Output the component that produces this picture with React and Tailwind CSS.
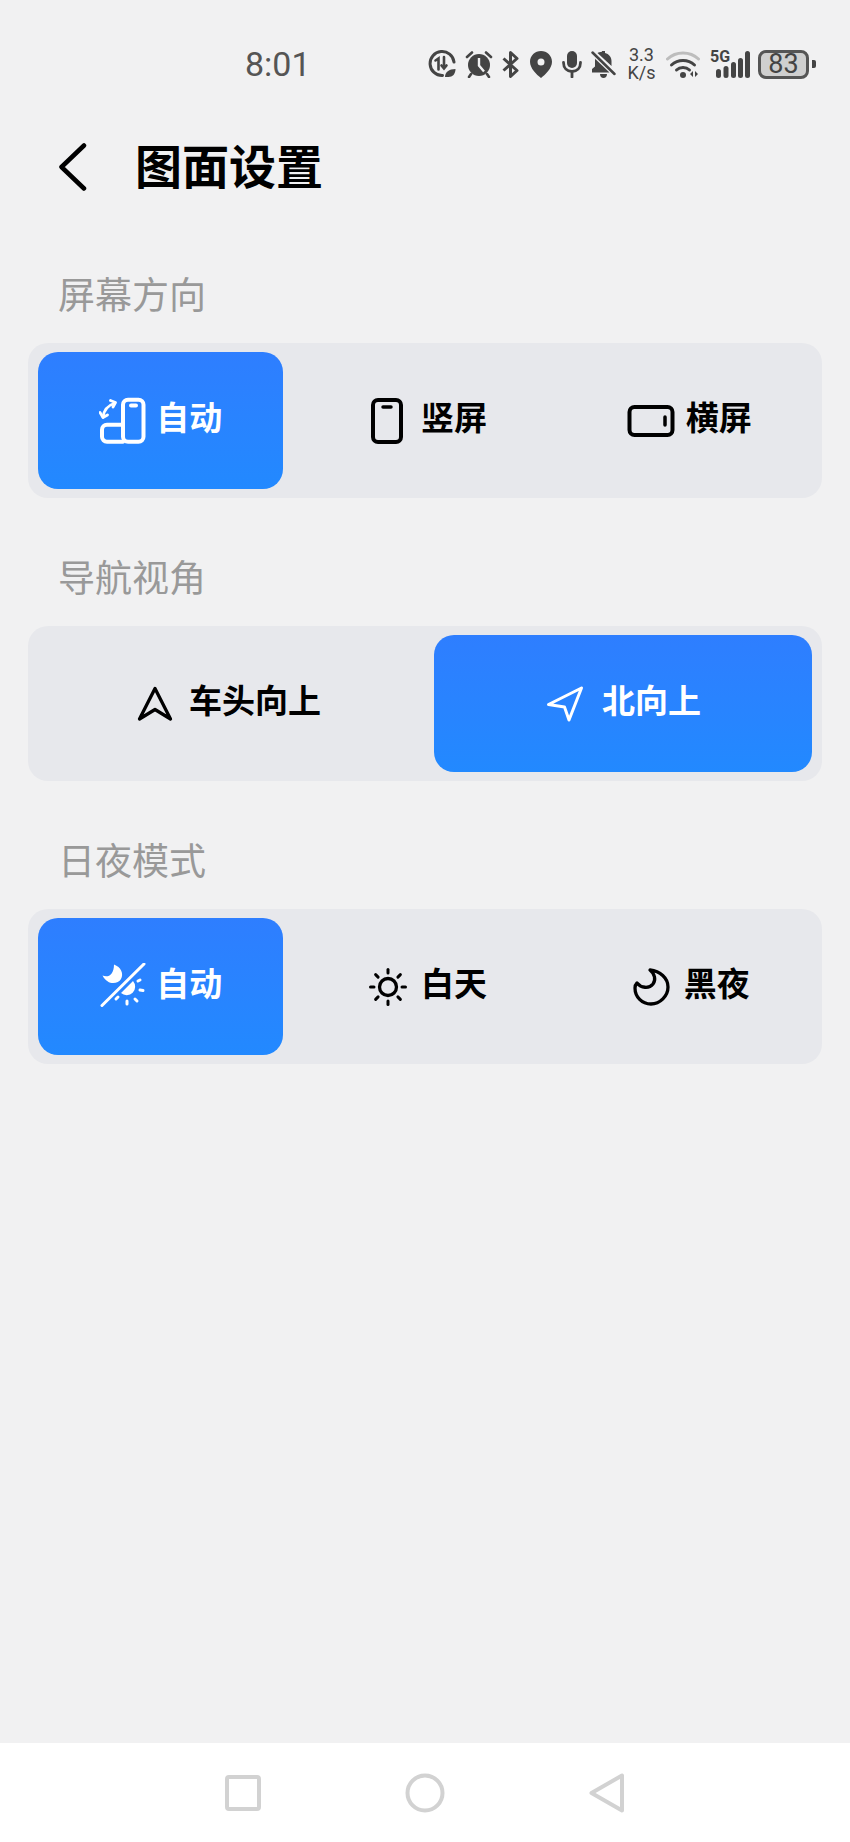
import React from "react";

const FONT = '"Noto Sans CJK SC", "Noto Sans", sans-serif';

function Saver() {
  return (
    <svg width="28" height="28" viewBox="0 0 28 28" fill="none" stroke="#444" strokeWidth="3" strokeLinecap="round">
      <path d="M14.5 25.5A12 12 0 1 1 26 12" />
      <path d="M10.5 19.5V8.5L7.5 10.5" strokeWidth="2.6" />
      <path d="M16 7v11M13.5 15.5L16 18.5L18.5 15.5" strokeWidth="2.6" />
      <path d="M17 27c0-5 4-8 10.5-8c0 5-3 8-7 8z" fill="#444" stroke="none" />
    </svg>
  );
}
function Alarm() {
  return (
    <svg width="28" height="28" viewBox="0 0 28 28" fill="none">
      <circle cx="14" cy="15" r="11" fill="#444" />
      <path d="M14 8v7.5l5 6" stroke="#f1f1f2" strokeWidth="2.4" />
      <path d="M2 7L7 2.500M26 7L21 2.500M6 24L4 27M22 24L24 27" stroke="#444" strokeWidth="2.6" strokeLinecap="round" />
    </svg>
  );
}
function Bluetooth() {
  return (
    <svg width="17" height="27" viewBox="0 0 17 27" fill="none" stroke="#444" strokeWidth="3" strokeLinejoin="round">
      <path d="M1.500 7.500L15 19.500L8.500 25.500V1.500L15 7.500L1.500 19.500" />
    </svg>
  );
}
function Pin() {
  return (
    <svg width="22" height="27" viewBox="0 0 22 27">
      <path fillRule="evenodd" fill="#444" d="M11 0C17 0 22 4.700 22 10.800C22 17.500 15.500 23.500 11 27C6.500 23.500 0 17.500 0 10.800C0 4.700 5 0 11 0ZM11 7.500A3.500 3.500 0 1 0 11 14.500A3.500 3.500 0 1 0 11 7.500Z" />
    </svg>
  );
}
function Mic() {
  return (
    <svg width="20" height="27" viewBox="0 0 20 27" fill="none" stroke="#444" strokeWidth="2.800" strokeLinecap="round">
      <rect x="5" y="0" width="10" height="17" rx="5" fill="#444" stroke="none" />
      <path d="M1.500 11.500C1.500 17 5 20.500 10 20.500C15 20.500 18.500 17 18.500 11.500M10 20.500V26" />
    </svg>
  );
}
function BellOff() {
  return (
    <svg width="25" height="27" viewBox="0 0 25 27" fill="none">
      <path fill="#444" d="M11 0h3v2c4 1 6.500 4 6.500 8v5l-14-13c1-.6 2.500-.9 4.500-1.200zM3.800 7.500L18.500 21.500H1v-3.500l3-2.500v-5.500c0-.8 0-1.700.2-2.500zM9 23h7c0 2.500-1.500 4-3.500 4S9 25.500 9 23z" />
      <path d="M1.500 1.500L23.500 23" stroke="#444" strokeWidth="2.500" strokeLinecap="round" />
    </svg>
  );
}
function Wifi() {
  return (
    <svg width="35" height="27" viewBox="0 0 35 27" fill="none" strokeLinecap="round">
      <path d="M1.500 8C10 0 24 0 32.500 8" stroke="#bdbdbd" strokeWidth="3" />
      <path d="M5.500 14C12 8 22 8 28.500 14" stroke="#444" strokeWidth="3" />
      <path d="M10.500 19C14 15.700 20 15.700 23.500 19" stroke="#444" strokeWidth="3" />
      <circle cx="17" cy="24" r="3" fill="#444" />
      <path fill="#444" d="M27 20v6l-3-3zM29 20v6l3-3z" />
    </svg>
  );
}
function Bars() {
  return (
    <svg width="34" height="27" viewBox="0 0 34 27" fill="#444">
      <rect x="0" y="18" width="5" height="9" rx="2.500" />
      <rect x="7.500" y="15" width="5" height="12" rx="2.500" />
      <rect x="15" y="11" width="5" height="16" rx="2.500" />
      <rect x="22" y="7" width="5" height="20" rx="2.500" />
      <rect x="29" y="0" width="5" height="27" rx="2.500" />
    </svg>
  );
}

function Chevron() {
  return (
    <svg width="28" height="48" viewBox="0 0 28 48" fill="none" stroke="#000" strokeWidth="4.500" strokeLinecap="round" strokeLinejoin="round">
      <path d="M25 2.500L2.500 24L25 45.500" />
    </svg>
  );
}
function Rotate() {
  return (
    <svg width="48" height="48" viewBox="0 0 48 48" fill="none" stroke="#fff" strokeWidth="4" strokeLinecap="round" strokeLinejoin="round">
      <rect x="24" y="2.700" width="20.500" height="42" rx="5" />
      <path d="M32 8.500h5" />
      <path d="M24 27.700H8a5 5 0 0 0-5 5V39.700a5 5 0 0 0 5 5H24" />
      <path d="M4 20C5 13 9 8.500 15 6.500" strokeWidth="2.800" />
      <path d="M11.500 3.500L16.500 5.500L14 10M1 15.500L4 20.500L8.500 18" strokeWidth="2.800" />
    </svg>
  );
}
function Portrait() {
  return (
    <svg width="34" height="48" viewBox="0 0 34 48" fill="none" stroke="#000" strokeWidth="4" strokeLinecap="round">
      <rect x="3" y="3" width="28" height="42" rx="5" />
      <path d="M13 10h8" strokeWidth="3.500" />
    </svg>
  );
}
function Landscape() {
  return (
    <svg width="48" height="34" viewBox="0 0 48 34" fill="none" stroke="#000" strokeWidth="4" strokeLinecap="round">
      <rect x="2.500" y="3" width="43" height="28" rx="5" />
      <path d="M38 13v8" strokeWidth="3.500" />
    </svg>
  );
}
function NavUp() {
  return (
    <svg width="36" height="36" viewBox="0 0 36 36" fill="none" stroke="#000" strokeWidth="3.300" strokeLinejoin="round">
      <path d="M18 2.500L33.500 33L18 23.500L2.500 33Z" />
    </svg>
  );
}
function NavNorth() {
  return (
    <svg width="38" height="36" viewBox="0 0 38 36" fill="none" stroke="#fff" strokeWidth="3" strokeLinejoin="round">
      <path d="M35.500 2L2.500 18.500L18.500 21L23 34Z" />
    </svg>
  );
}
function AutoNight() {
  return (
    <svg width="48" height="48" viewBox="0 0 48 48" fill="none" strokeLinecap="round">
      <path fill="#fff" d="M15 1.500C22 4 25 11 22 16C19 21 9 23 3.500 12.500C9 15 15 12 15 1.500Z" />
      <path d="M3 42.500L45 1" stroke="#fff" strokeWidth="3" />
      <path fill="#fff" d="M34 18A8.500 8.500 0 0 1 22 30Z" />
      <path d="M39 18L41 17M41 27L44 27.500M36 36L38 38M28 38L28 41M19 34L17 36" stroke="#fff" strokeWidth="3" />
    </svg>
  );
}
function Sun() {
  const rays = [0, 45, 90, 135, 180, 225, 270, 315];
  return (
    <svg width="38" height="38" viewBox="0 0 38 38" fill="none" stroke="#000" strokeLinecap="round">
      <circle cx="19" cy="19" r="8.500" strokeWidth="3.300" />
      {rays.map((a) => (
        <path key={a} d="M19 1.500V5" strokeWidth="3" transform={`rotate(${a} 19 19)`} />
      ))}
    </svg>
  );
}
function Moon() {
  return (
    <svg width="38" height="38" viewBox="0 0 38 38" fill="none" stroke="#000" strokeWidth="3.300" strokeLinejoin="round">
      <path d="M17 2C27 3 35 10 35 19C35 28 27 36 18 36C9 36 2 29 2 20C2 18 3 16 4 15C8 20 16 21 20 16C23 12 22 6 17 2Z" />
    </svg>
  );
}

function Option({ icon, label, active, className }) {
  return (
    <div
      className={
        "flex h-[137px] items-center justify-center rounded-[20px] text-[33px] leading-none font-semibold " +
        (active ? "bg-linear-to-b from-[#2e7eff] to-[#2289ff] text-white " : "text-black ") +
        className
      }
    >
      {icon}
      <span className="pb-[8px]">{label}</span>
    </div>
  );
}

function Section({ title, cols, children }) {
  return (
    <section className="mb-[55px]">
      <h2 className="mb-[26px] ml-[58px] text-[37px] leading-[47px] font-normal text-[#999999]">{title}</h2>
      <div className={"mx-[28px] grid rounded-[20px] bg-[#e7e8ec] px-[10px] py-[9px] " + cols}>{children}</div>
    </section>
  );
}

export default function App() {
  return (
    <div className="flex h-[1842px] w-[850px] flex-col overflow-hidden bg-[#f1f1f2]" style={{ fontFamily: FONT }}>
      <div className="flex h-[128px] shrink-0 items-center pr-[34px] pl-[245px] text-[#555555]">
        <span className="text-[34px] leading-none" style={{ fontFamily: "Roboto, sans-serif" }}>8:01</span>
        <div className="ml-auto flex items-center">
          <Saver />
          <span className="ml-[9px] flex"><Alarm /></span>
          <span className="ml-[9px] flex"><Bluetooth /></span>
          <span className="ml-[11px] flex"><Pin /></span>
          <span className="ml-[10px] flex"><Mic /></span>
          <span className="ml-[9px] flex"><BellOff /></span>
          <span className="ml-[12px] flex w-[27px] flex-col items-center text-[18px] leading-[18px] text-[#444444]" style={{ fontFamily: "Roboto, sans-serif" }}>
            <span>3.3</span>
            <span>K/s</span>
          </span>
          <span className="ml-[11px] flex"><Wifi /></span>
          <span className="relative ml-[15px] flex">
            <Bars />
            <span className="absolute top-[-2px] left-[-6px] text-[16px] leading-[16px] font-bold text-[#444444]" style={{ fontFamily: "Roboto, sans-serif" }}>5G</span>
          </span>
          <span className="ml-[8px] flex h-[29px] w-[51px] items-center justify-center rounded-[8px] border-[3px] border-[#555555] bg-[#cfcfcf] text-[27px] leading-none text-[#444444]" style={{ fontFamily: "Roboto, sans-serif" }}>83</span>
          <span className="ml-[3px] h-[8px] w-[4px] rounded-r-[2px] bg-[#444444]" />
        </div>
      </div>

      <header className="flex h-[74px] shrink-0 items-center pl-[59px]">
        <span className="mt-[4px] flex"><Chevron /></span>
        <h1 className="mb-[4px] ml-[48px] text-[47px] leading-none font-semibold text-black">图面设置</h1>
      </header>

      <main className="mt-[68px] flex-1">
        <Section title="屏幕方向" cols="grid-cols-3 gap-x-[19px]">
          <Option active icon={<Rotate />} label="自动" className="gap-[9px]" />
          <Option icon={<Portrait />} label="竖屏" className="gap-[17px] pl-[7px]" />
          <Option icon={<Landscape />} label="横屏" className="gap-[11px]" />
        </Section>
        <Section title="导航视角" cols="grid-cols-2 gap-x-[18px]">
          <Option icon={<NavUp />} label="车头向上" className="gap-[16px] pl-[4px]" />
          <Option active icon={<NavNorth />} label="北向上" className="gap-[18px] pl-[1px]" />
        </Section>
        <Section title="日夜模式" cols="grid-cols-3 gap-x-[19px]">
          <Option active icon={<AutoNight />} label="自动" className="gap-[9px]" />
          <Option icon={<Sun />} label="白天" className="gap-[14px] pl-[6px]" />
          <Option icon={<Moon />} label="黑夜" className="gap-[13px] pl-[4px]" />
        </Section>
      </main>

      <nav className="flex h-[99px] shrink-0 items-center justify-center bg-white">
        <div className="flex w-[182px] justify-center">
          <svg width="36" height="36" viewBox="0 0 36 36" fill="none" stroke="#d2d2d2" strokeWidth="4" strokeLinejoin="round">
            <rect x="2" y="2" width="32" height="32" rx="2" />
          </svg>
        </div>
        <div className="flex w-[182px] justify-center">
          <svg width="40" height="40" viewBox="0 0 40 40" fill="none" stroke="#d2d2d2" strokeWidth="4">
            <circle cx="20" cy="20" r="17.500" />
          </svg>
        </div>
        <div className="flex w-[182px] justify-center">
          <svg width="36" height="40" viewBox="0 0 36 40" fill="none" stroke="#d2d2d2" strokeWidth="4" strokeLinejoin="round">
            <path d="M33 2.500V37.500L2.500 20Z" />
          </svg>
        </div>
      </nav>
    </div>
  );
}
